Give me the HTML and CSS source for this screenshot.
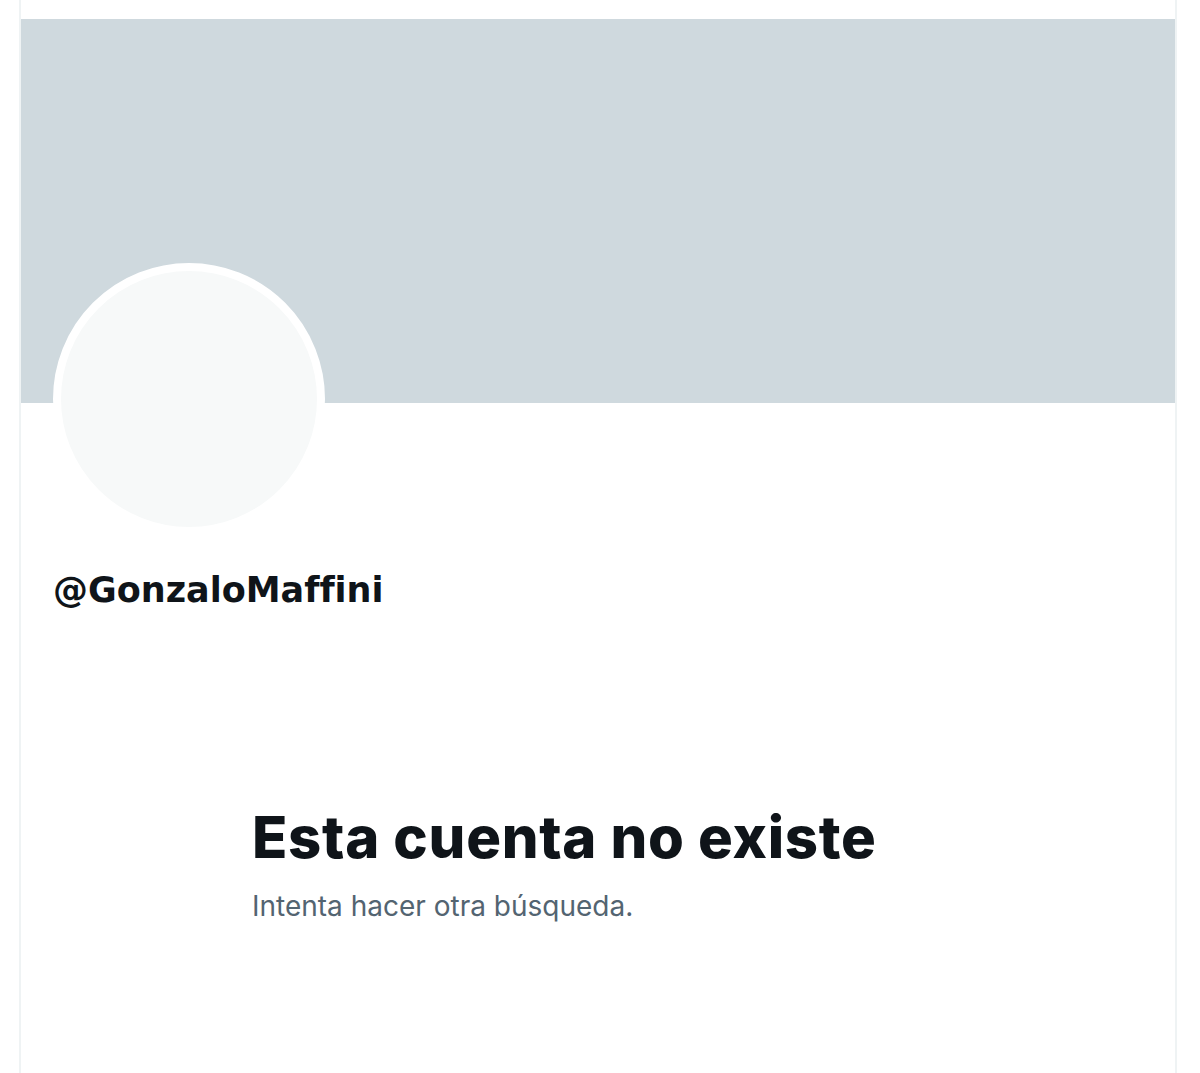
FILE: index.html
```html
<!DOCTYPE html>
<html lang="es">
<head>
  <meta charset="UTF-8" />
  <meta name="viewport" content="width=device-width, initial-scale=1.0"/>
  <title>@GonzaloMaffini</title>
  <link rel="stylesheet" href="styles.css">
</head>
<body>

  <main class="column">
    <div class="banner"></div>

    <div class="profile">
      <div class="avatar"></div>
      <div class="handle">@GonzaloMaffini</div>
    </div>

    <div class="empty">
      <h1>Esta cuenta no existe</h1>
      <p>Intenta hacer otra búsqueda.</p>
    </div>
  </main>

</body>
</html>
```

FILE: styles.css
```css
body {
  margin: 0;
  background: #fff;
  font-family: "DejaVu Sans", sans-serif;
  color: #0f1419;
}
.column {
  width: 1154px;
  min-height: 1073px;
  margin-left: 19px;
  padding-top: 19px;
  border-left: 2px solid #eff3f4;
  border-right: 2px solid #eff3f4;
  box-sizing: content-box;
}
.banner {
  height: 384px;
  background: #cfd9de;
}
.profile {
  padding: 0 32px;
}
.avatar {
  width: 256px;
  height: 256px;
  margin-top: -140px;
  border: 8px solid #fff;
  border-radius: 50%;
  background: #f7f9f9;
}
.handle {
  margin-top: 33px;
  font-weight: bold;
  font-size: 35px;
  line-height: 44px;
}
.empty {
  padding: 190px 0 0 231px;
}
.empty h1 {
  margin: 0;
  font-family: Inter, sans-serif;
  font-size: 58px;
  font-weight: 800;
  line-height: 70px;
  letter-spacing: 0.7px;
}
.empty p {
  margin: 16px 0 0;
  font-family: Inter, sans-serif;
  font-size: 28px;
  line-height: 36px;
  color: #536471;
}
```
